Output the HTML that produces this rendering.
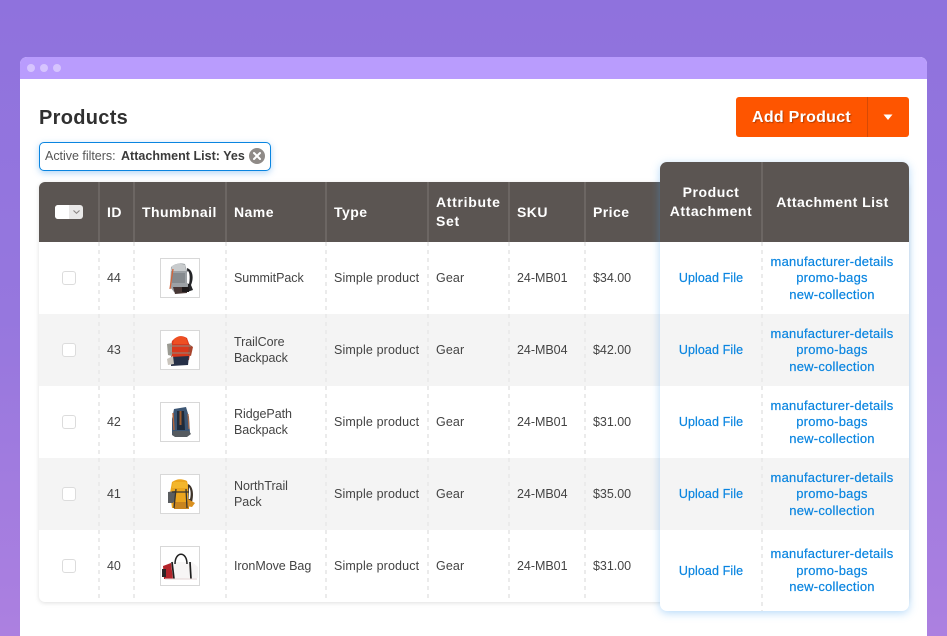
<!DOCTYPE html>
<html><head><meta charset="utf-8">
<style>
*{box-sizing:border-box}
html,body{margin:0;padding:0;width:947px;height:636px;overflow:hidden}
body{position:relative;background:linear-gradient(180deg,#8f72dd 0%,#9677de 50%,#ac80e0 100%);font-family:"Liberation Sans",sans-serif}
.a{position:absolute}
.t{position:absolute;white-space:nowrap;font-size:12.5px;letter-spacing:.13px;color:#444;line-height:16.5px}
.n{letter-spacing:-.05px;line-height:16px}
.d{letter-spacing:-.03px}
.h{position:absolute;white-space:nowrap;font-size:14px;font-weight:bold;letter-spacing:.45px;color:#fff;line-height:19px}
.l{position:absolute;white-space:nowrap;font-size:13px;letter-spacing:.22px;color:#0a85e0;line-height:16.5px;text-align:center;-webkit-text-stroke:.2px #0a85e0}
.u{font-size:12.500px;letter-spacing:.1px}
.r{position:absolute;left:39px;width:870px;height:72px}
.v{position:absolute;width:2px;top:242px;height:360px;background:repeating-linear-gradient(180deg,#ebebeb 0 4px,transparent 4px 8px)}
.hv{position:absolute;width:2px;top:182px;height:60px;background:#6c6663}
.cb{position:absolute;left:62px;width:14px;height:14px;border:1px solid #dcdcdc;border-radius:3px;background:#fff}
.th{position:absolute;left:160px;width:40px;height:40px;border:1px solid #d8d8d8;background:#fff;overflow:hidden}
.th svg{display:block;width:38px;height:38px;filter:blur(.35px)}
</style></head>
<body>
<div class="a" style="left:20px;top:57px;width:907px;height:579px;background:#fff;border-radius:7px 7px 0 0;overflow:hidden">
  <div class="a" style="left:0;top:0;width:907px;height:22px;background:#b99cfd"></div>
  <div class="a" style="left:7px;top:7px;width:8px;height:8px;border-radius:50%;background:#d6c4fe"></div>
  <div class="a" style="left:20px;top:7px;width:8px;height:8px;border-radius:50%;background:#d6c4fe"></div>
  <div class="a" style="left:33px;top:7px;width:8px;height:8px;border-radius:50%;background:#d6c4fe"></div>
</div>

<div class="a" style="left:39px;top:105px;font-size:20px;font-weight:bold;letter-spacing:.3px;color:#303030;line-height:26px;white-space:nowrap">Products</div>

<div class="a" style="left:736px;top:97px;width:173px;height:40px;background:#fe5500;border-radius:3px"></div>
<div class="a" style="left:867px;top:97px;width:1px;height:40px;background:#d64a05"></div>
<div class="a" style="left:752px;top:107px;font-size:16px;font-weight:bold;letter-spacing:.27px;color:#fff;line-height:22px;white-space:nowrap;text-shadow:1px 1px 1px rgba(120,40,0,.55)">Add Product</div>
<svg class="a" style="left:883px;top:114px" width="10" height="7" viewBox="0 0 10 7"><path d="M0.5 0.5H9.5L5 6Z" fill="#fff"/></svg>

<div class="a" style="left:39px;top:142px;width:232px;height:29px;background:#fff;border:1px solid #0a85e0;border-radius:5px;box-shadow:0 2px 7px rgba(60,150,235,.4)"></div>
<div class="a" style="left:45px;top:148px;font-size:12.5px;letter-spacing:-.02px;color:#555;line-height:17px;white-space:nowrap">Active filters:</div>
<div class="a" style="left:121px;top:148px;font-size:12.5px;font-weight:bold;letter-spacing:.02px;color:#3a3a3a;line-height:17px;white-space:nowrap">Attachment List: Yes</div>
<svg class="a" style="left:249px;top:148px" width="16" height="16" viewBox="0 0 16 16"><circle cx="8" cy="8" r="8" fill="#8f8a87"/><path d="M5 5L11 11M11 5L5 11" stroke="#fff" stroke-width="2" stroke-linecap="round"/></svg>

<!-- main table -->
<div class="a" style="left:39px;top:182px;width:870px;height:420px;background:#fff;border-radius:6px;box-shadow:0 1px 5px rgba(0,0,0,.13)"></div>
<div class="a" style="left:39px;top:182px;width:870px;height:60px;background:#5b5552;border-radius:6px 6px 0 0"></div>
<div class="r" style="top:314px;background:#f4f4f4"></div>
<div class="r" style="top:458px;background:#f4f4f4"></div>

<div class="hv" style="left:98px"></div><div class="hv" style="left:133px"></div><div class="hv" style="left:225px"></div><div class="hv" style="left:325px"></div><div class="hv" style="left:427px"></div><div class="hv" style="left:508px"></div><div class="hv" style="left:584px"></div>
<div class="v" style="left:98px"></div><div class="v" style="left:133px"></div><div class="v" style="left:225px"></div><div class="v" style="left:325px"></div><div class="v" style="left:427px"></div><div class="v" style="left:508px"></div><div class="v" style="left:584px"></div>

<div class="a" style="left:55px;top:205px;width:28px;height:14px;background:#e9e8e8;border-radius:3px"></div>
<div class="a" style="left:55px;top:205px;width:14px;height:14px;background:#fff;border-radius:3px 0 0 3px"></div>
<svg class="a" style="left:72px;top:209px" width="9" height="6" viewBox="0 0 9 6"><path d="M1.5 1.5L4.5 4.3L7.5 1.5" fill="none" stroke="#8a8583" stroke-width="1.1"/></svg>

<div class="h" style="left:107px;top:203px">ID</div>
<div class="h" style="left:142px;top:203px">Thumbnail</div>
<div class="h" style="left:234px;top:203px">Name</div>
<div class="h" style="left:334px;top:203px">Type</div>
<div class="h" style="left:436px;top:193px;letter-spacing:.7px">Attribute<br>Set</div>
<div class="h" style="left:517px;top:203px">SKU</div>
<div class="h" style="left:593px;top:203px">Price</div>

<!-- row cells -->
<div class="cb" style="top:271px"></div><div class="cb" style="top:343px"></div><div class="cb" style="top:415px"></div><div class="cb" style="top:487px"></div><div class="cb" style="top:559px"></div>

<div class="t d" style="left:107px;top:270px">44</div>
<div class="t d" style="left:107px;top:342px">43</div>
<div class="t d" style="left:107px;top:414px">42</div>
<div class="t d" style="left:107px;top:486px">41</div>
<div class="t d" style="left:107px;top:558px">40</div>

<div class="th" style="top:258px"><svg viewBox="0 0 38 38"><path d="M10 8Q16 3 24 5L26 12L27 28L23 33H13L9 28Z" fill="#9ca1a5"/><path d="M11 7Q17 3 24 6L25 12H10Z" fill="#c8cbcd"/><path d="M11 14H24V24H11Z" fill="#858a8e"/><path d="M26 9C32 11 33 19 30 26L32 31L26 33L27 27Z" fill="#232427"/><path d="M27 12C29 14 29 20 28 25L26 24V13Z" fill="#fff"/><path d="M12 28H26V34L14 35Z" fill="#473735"/><path d="M12 10L9 30" stroke="#d2653a" stroke-width="1.3" fill="none"/><path d="M21 28H28V33H21Z" fill="#1d1a1a"/></svg></div>
<div class="th" style="top:330px"><svg viewBox="0 0 38 38"><path d="M11 10Q18 2 26 7L30 18L28 29L11 30L9 20Z" fill="#d8381c"/><path d="M13 8Q19 3 25 7L27 13H12Z" fill="#ee4f22"/><path d="M6 13L11 12L11 25L7 24Z" fill="#9a9a92"/><path d="M28 13L32 16L30 25L27 24Z" fill="#a9452e"/><path d="M10 26L28 25L27 34L10 35Z" fill="#263047"/><path d="M6 28L12 25L13 33L7 34Z" fill="#c9c4bc"/><path d="M9 15H30M9 22H29" stroke="#8c8a80" stroke-width=".9"/></svg></div>
<div class="th" style="top:402px"><svg viewBox="0 0 38 38"><path d="M13 6L25 4L28 14L29 30L11 32L11 16Z" fill="#3c5674"/><path d="M16 8H23L24 27H16Z" fill="#1f2b3b"/><path d="M18.500 8H20.500V22H18.500Z" fill="#9a5a2e"/><path d="M12 10L13 27" stroke="#b2643a" stroke-width="1.400"/><path d="M27 11L28 26" stroke="#a86a48" stroke-width="1.200"/><path d="M12 28H28L30 31L26 34H14L11 32Z" fill="#565b60"/></svg></div>
<div class="th" style="top:474px"><svg viewBox="0 0 38 38"><path d="M11 7Q18 2 26 6L28 14L27 33L11 33L9 18Z" fill="#eba51e"/><path d="M12 7H25L27 13H11Z" fill="#f3b62c"/><path d="M27 9C32 11 33 19 31 27L27 27Z" fill="#3e342a"/><path d="M28 12C30 15 30 20 29 24L27.500 24Z" fill="#fff"/><path d="M7 17L14 16L14 28L7 28Z" fill="#5a5d60"/><path d="M12 27H28V34H13Z" fill="#c8841e"/><path d="M27 24L34 28L31 32L25 31Z" fill="#da9120"/><path d="M11 17H28M15 14L13 33M25 14L26 33" stroke="#38342e" stroke-width="1.300" fill="none"/></svg></div>
<div class="th" style="top:546px"><svg viewBox="0 0 38 38"><path d="M3 19L11 15H31L37 20V31L3 32Z" fill="#f7f5f5"/><path d="M2 19L10 16L12 32L3 32Z" fill="#b3242a"/><path d="M1 22H5V30H1Z" fill="#2a2526"/><path d="M11 15L13 32M29 15L30 32" stroke="#1e1e1e" stroke-width="1.700"/><path d="M14 17C14 4 26 4 26 17" fill="none" stroke="#222" stroke-width="1.500"/><path d="M4 32H36" stroke="#e3d3d3" stroke-width="1"/></svg></div>

<div class="t n" style="left:234px;top:270px">SummitPack</div>
<div class="t n" style="left:234px;top:334px">TrailCore<br>Backpack</div>
<div class="t n" style="left:234px;top:406px">RidgePath<br>Backpack</div>
<div class="t n" style="left:234px;top:478px">NorthTrail<br>Pack</div>
<div class="t n" style="left:234px;top:558px">IronMove Bag</div>

<div class="t" style="left:334px;top:270px">Simple product</div>
<div class="t" style="left:334px;top:342px">Simple product</div>
<div class="t" style="left:334px;top:414px">Simple product</div>
<div class="t" style="left:334px;top:486px">Simple product</div>
<div class="t" style="left:334px;top:558px">Simple product</div>

<div class="t" style="left:436px;top:270px">Gear</div>
<div class="t" style="left:436px;top:342px">Gear</div>
<div class="t" style="left:436px;top:414px">Gear</div>
<div class="t" style="left:436px;top:486px">Gear</div>
<div class="t" style="left:436px;top:558px">Gear</div>

<div class="t d" style="left:517px;top:270px">24-MB01</div>
<div class="t d" style="left:517px;top:342px">24-MB04</div>
<div class="t d" style="left:517px;top:414px">24-MB01</div>
<div class="t d" style="left:517px;top:486px">24-MB04</div>
<div class="t d" style="left:517px;top:558px">24-MB01</div>

<div class="t d" style="left:593px;top:270px">$34.00</div>
<div class="t d" style="left:593px;top:342px">$42.00</div>
<div class="t d" style="left:593px;top:414px">$31.00</div>
<div class="t d" style="left:593px;top:486px">$35.00</div>
<div class="t d" style="left:593px;top:558px">$31.00</div>

<!-- highlighted panel -->
<div class="a" style="left:660px;top:162px;width:249px;height:449px;background:#fff;border-radius:7px;box-shadow:0 2px 9px rgba(70,160,240,.4);overflow:hidden">
  <div class="a" style="left:0;top:0;width:249px;height:80px;background:#5b5552"></div>
  <div class="a" style="left:0;top:152px;width:249px;height:72px;background:#f4f4f4"></div>
  <div class="a" style="left:0;top:296px;width:249px;height:72px;background:#f4f4f4"></div>
  <div class="a" style="left:101px;top:0;width:2px;height:80px;background:#6c6663"></div>
  <div class="a" style="left:101px;top:80px;width:2px;height:369px;background:repeating-linear-gradient(180deg,#ebebeb 0 4px,transparent 4px 8px)"></div>
</div>
<div class="h" style="left:660px;top:183px;width:102px;text-align:center;letter-spacing:.55px">Product<br>Attachment</div>
<div class="h" style="left:762px;top:193px;width:141px;text-align:center">Attachment List</div>

<div class="l u" style="left:660px;top:270px;width:102px">Upload File</div>
<div class="l u" style="left:660px;top:342px;width:102px">Upload File</div>
<div class="l u" style="left:660px;top:414px;width:102px">Upload File</div>
<div class="l u" style="left:660px;top:486px;width:102px">Upload File</div>
<div class="l u" style="left:660px;top:563px;width:102px">Upload File</div>

<div class="l" style="left:762px;top:253.5px;width:140px">manufacturer-details<br>promo-bags<br>new-collection</div>
<div class="l" style="left:762px;top:325.5px;width:140px">manufacturer-details<br>promo-bags<br>new-collection</div>
<div class="l" style="left:762px;top:397.5px;width:140px">manufacturer-details<br>promo-bags<br>new-collection</div>
<div class="l" style="left:762px;top:469.5px;width:140px">manufacturer-details<br>promo-bags<br>new-collection</div>
<div class="l" style="left:762px;top:546px;width:140px">manufacturer-details<br>promo-bags<br>new-collection</div>
</body></html>
